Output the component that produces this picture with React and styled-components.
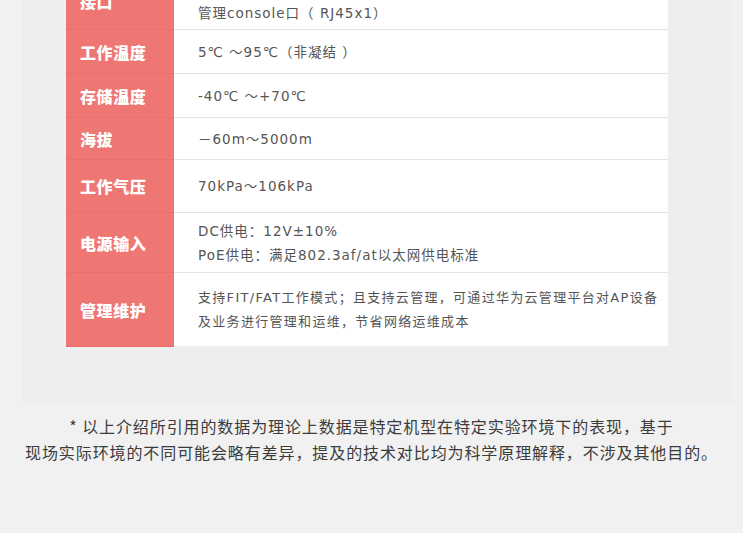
import React from 'react'
import styled, { createGlobalStyle } from 'styled-components'

const GlobalStyle = createGlobalStyle`
  html, body {
    margin: 0;
    padding: 0;
    background: #f1f1f1;
    overflow: hidden;
  }
  body {
    font-family: "Noto Sans CJK SC", "Noto Sans", sans-serif;
  }
  * {
    box-sizing: border-box;
  }
`;

const specs = [
  { label: '接口', height: 58, lines: ['1个10/100/1000M自适应以太网接口（RJ45）', '管理console口（ RJ45x1）'] },
  { label: '工作温度', height: 44, lines: ['5℃ ～95℃（非凝结 ）'] },
  { label: '存储温度', height: 44, lines: ['-40℃ ～+70℃'] },
  { label: '海拔', height: 42, lines: ['－60m～5000m'] },
  { label: '工作气压', height: 53, lines: ['70kPa～106kPa'] },
  { label: '电源输入', height: 60, lines: ['DC供电：12V±10%', 'PoE供电：满足802.3af/at以太网供电标准'] },
  { label: '管理维护', height: 73, small: true, lines: ['支持FIT/FAT工作模式；且支持云管理，可通过华为云管理平台对AP设备', '及业务进行管理和运维，节省网络运维成本'] },
];

export default function App() {
  return (
    <Page>
      <GlobalStyle />
      <Panel>
        <Table>
          {specs.map((row) => (
            <Row key={row.label} $h={row.height}>
              <Label>{row.label}</Label>
              <Value $small={row.small}>
                {row.lines.map((l) => <Line key={l}>{l}</Line>)}
              </Value>
            </Row>
          ))}
        </Table>
      </Panel>
      <Note>
        <p>* 以上介绍所引用的数据为理论上数据是特定机型在特定实验环境下的表现，基于</p>
        <p>现场实际环境的不同可能会略有差异，提及的技术对比均为科学原理解释，不涉及其他目的。</p>
      </Note>
    </Page>
  )
}

const Page = styled.div`
  width: 743px;
  height: 533px;
  overflow: hidden;
`;

const Panel = styled.div`
  margin: -28px 10px 0 22px;
  padding: 0 65px 57px 44px;
  background: #eeeef0;
`;

const Table = styled.div`
  display: flex;
  flex-direction: column;
  background: #fff;
`;

const Row = styled.div`
  display: grid;
  grid-template-columns: 108px 1fr;
  height: ${(p) => p.$h}px;
  border-bottom: 1px solid #e4e4e4;
  &:last-child {
    border-bottom: none;
  }
`;

const Label = styled.div`
  display: flex;
  align-items: center;
  padding-left: 14px;
  margin-bottom: -1px;
  background: #ee7774;
  border-bottom: 1px solid #e6706d;
  color: #fff;
  font-size: 16px;
  font-weight: 900;
  letter-spacing: 0.6px;
`;

const Value = styled.div`
  display: flex;
  flex-direction: column;
  justify-content: center;
  padding-left: 24px;
  color: #555;
  font-family: "DejaVu Sans", "Noto Sans CJK SC", sans-serif;
  font-size: ${(p) => (p.$small ? '13px' : '13.5px')};
  letter-spacing: ${(p) => (p.$small ? '1.3px' : '1px')};
`;

const Line = styled.div`
  line-height: 24px;
  white-space: nowrap;
`;

const Note = styled.div`
  padding-top: 10px;
  text-align: center;
  color: #3c3c3c;
  font-size: 16px;
  letter-spacing: 0.9px;
  line-height: 26px;
  p {
    margin: 0;
  }
`;
